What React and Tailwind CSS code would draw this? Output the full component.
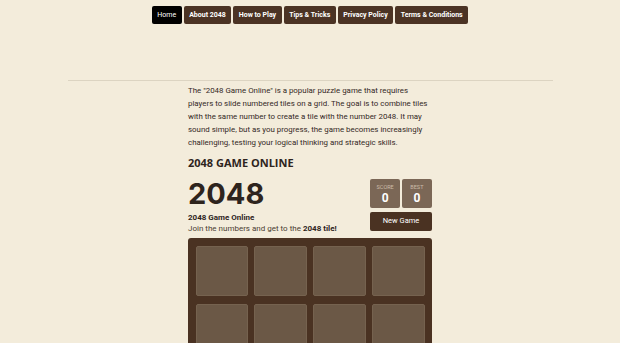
import React from "react";

const links = ["Home", "About 2048", "How to Play", "Tips & Tricks", "Privacy Policy", "Terms & Conditions"];

function Nav() {
  return (
    <nav className="flex justify-center gap-[2px] pt-[6px]">
      {links.map((l, i) => (
        <a
          key={l}
          href="#"
          className={
            "flex h-[18px] items-center rounded-[2px] px-[5.5px] text-[7px] text-white " +
            (i === 0 ? "bg-black font-normal" : "bg-[#4b3324] font-bold")
          }
        >
          {l}
        </a>
      ))}
    </nav>
  );
}

function ScoreBox({ label, value }) {
  return (
    <div className="flex h-[29px] flex-col items-center rounded-[2px] bg-[#7b6756] pt-[5px]">
      <span className="text-[5.5px] leading-[7px] uppercase text-[#cbbca9]">{label}</span>
      <span className="text-[12px] leading-[14px] font-bold text-white">{value}</span>
    </div>
  );
}

function Board() {
  const cells = Array.from({ length: 16 });
  return (
    <div className="mt-[4px] w-full rounded-[3px] bg-[#4a3222] px-[7.5px] pt-[8px] pb-[8px]">
      <div className="grid grid-cols-4 gap-x-[6.5px] gap-y-[8.5px]">
        {cells.map((_, i) => (
          <div key={i} className="h-[50px] rounded-[2px] border border-[#75624f] bg-[#6b5846]" />
        ))}
      </div>
    </div>
  );
}

export default function App() {
  return (
    <div
      className="min-h-screen overflow-hidden bg-[#f3ecdb] text-[#3b2e25]"
      style={{ fontFamily: "Roboto, 'Noto Sans', sans-serif" }}
    >
      <Nav />
      <div className="mx-auto mt-[56px] w-[485px] border-t border-[#dcd4c2]" />
      <div className="mx-auto w-[244px] pt-[4px]">
        <p className="text-[7.9px] leading-[12.9px] text-[#33281f]">
          The "2048 Game Online" is a popular puzzle game that requires players to slide numbered tiles on a grid. The goal is to combine tiles with the same number to create a tile with the number 2048. It may sound simple, but as you progress, the game becomes increasingly challenging, testing your logical thinking and strategic skills.
        </p>
        <h2
          className="mt-[6px] text-[11px] leading-[14px] font-bold text-[#2e241d]"
          style={{ fontFamily: "'Open Sans', sans-serif" }}
        >
          2048 GAME ONLINE
        </h2>
        <div className="mt-[9px] flex justify-between">
          <div>
            <div
              className="text-[29px] leading-[30px] font-bold text-[#2e241d]"
              style={{ fontFamily: "Inter, sans-serif" }}
            >
              2048
            </div>
            <div className="mt-[3px] text-[8px] leading-[11px] font-bold text-[#2e241d]">2048 Game Online</div>
            <div className="text-[8px] leading-[11px] text-[#4a3c32]">
              Join the numbers and get to the <b className="text-[#2e241d]">2048 tile!</b>
            </div>
          </div>
          <div className="flex w-[62px] flex-col gap-[4px]">
            <div className="grid grid-cols-2 gap-[1.5px]">
              <ScoreBox label="Score" value="0" />
              <ScoreBox label="Best" value="0" />
            </div>
            <button className="h-[19px] rounded-[2px] bg-[#4a3222] text-[7.5px] text-white">New Game</button>
          </div>
        </div>
        <Board />
      </div>
    </div>
  );
}
